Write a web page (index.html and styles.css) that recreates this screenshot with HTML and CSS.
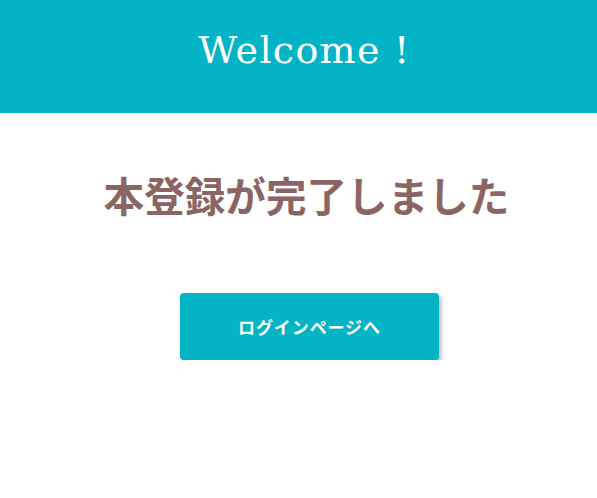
FILE: index.html
```html
<!DOCTYPE html>
<html lang="ja">
<head>
<meta charset="utf-8">
<link rel="stylesheet" href="styles.css">
</head>
<body>
<header class="header">
  <h1 class="brand">Welcome !</h1>
</header>
<main class="main">
  <h2 class="title">本登録が完了しました</h2>
  <a class="btn" href="#">ログインページへ</a>
</main>
</body>
</html>
```

FILE: styles.css
```css
html, body {
  margin: 0;
  padding: 0;
  background: #ffffff;
}
body {
  font-family: "Noto Sans CJK JP", "Noto Sans", sans-serif;
}
.header {
  background: #03b3c6;
  height: 113px;
  box-sizing: border-box;
  padding: 0 0 14px 12px;
  display: flex;
  align-items: center;
  justify-content: center;
}
.brand {
  margin: 0;
  font-family: "DejaVu Serif", serif;
  font-weight: normal;
  font-size: 38px;
  color: #ffffff;
  letter-spacing: 1.3px;
}
.main {
  display: flex;
  flex-direction: column;
  align-items: center;
  padding-left: 16px;
}
.title {
  margin: 54px 0 0;
  font-size: 40.6px;
  line-height: 56px;
  font-weight: bold;
  color: #8a6563;
}
.btn {
  margin: 70px 0 0 6px;
  width: 259px;
  height: 67px;
  display: flex;
  align-items: center;
  justify-content: center;
  background: #03b3c6;
  color: #ffffff;
  text-decoration: none;
  font-size: 17px;
  letter-spacing: 0.9px;
  font-weight: bold;
  border-radius: 4px;
  box-shadow: 2px 3px 4px rgba(0, 0, 0, 0.3);
}
```
